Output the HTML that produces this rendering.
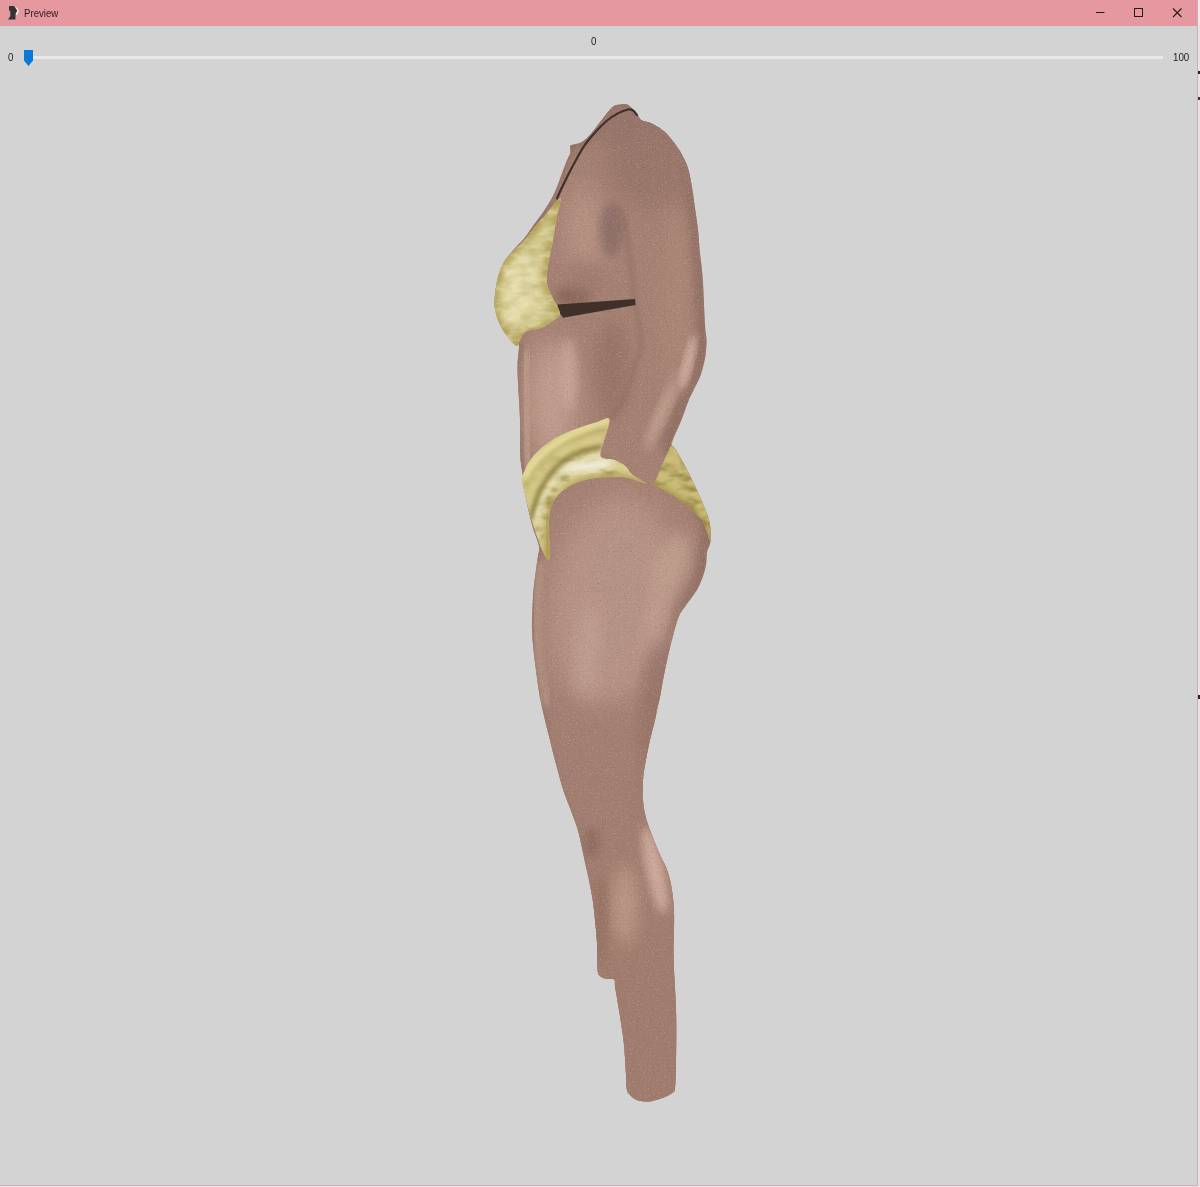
<!DOCTYPE html>
<html lang="en">
<head>
<meta charset="utf-8">
<title>Preview</title>
<style>
html,body{margin:0;padding:0;}
body{width:1200px;height:1187px;overflow:hidden;background:#e4e4e4;font-family:"Liberation Sans",sans-serif;position:relative;}
#win{position:absolute;left:0;top:0;width:1197px;height:1185px;background:#d3d3d3;border-right:1px solid #dfa9ae;border-bottom:1px solid #dfa9ae;overflow:hidden;}
#titlebar{position:absolute;left:0;top:0;width:1198px;height:26px;background:#e5989f;}
#title{position:absolute;left:24.3px;top:6px;font-size:11px;line-height:14px;color:#2a1a1c;transform:scaleX(0.875);transform-origin:0 0;}
.lbl{position:absolute;font-size:11.5px;line-height:12px;color:#222;transform:scaleX(0.85);transform-origin:0 0;}
#track{position:absolute;left:30px;top:56.2px;width:1133px;height:2.600px;background:#e8e8e8;}
#scene{position:absolute;left:0;top:0;}
</style>
</head>
<body>
<div id="win">
<svg id="scene" width="1200" height="1187" viewBox="0 0 1200 1187">

<defs>
  <clipPath id="cs"><path d="M611.0 108.5 C612.5 107.0 613.3 106.2 615.0 105.5 C616.7 104.8 619.0 104.7 621.0 104.5 C623.0 104.3 625.3 104.0 627.0 104.5 C628.7 105.0 629.2 105.8 631.0 107.5 C632.8 109.2 635.8 112.9 637.6 115.0 C639.4 117.1 639.1 118.8 641.6 120.3 C644.1 121.8 648.6 121.8 652.4 123.7 C656.2 125.6 661.0 128.7 664.6 131.8 C668.2 135.0 671.1 138.8 674.0 142.6 C676.9 146.4 679.8 150.7 682.0 154.7 C684.2 158.7 685.9 161.9 687.5 166.8 C689.1 171.7 690.2 176.9 691.5 184.3 C692.8 191.7 694.4 203.4 695.5 211.3 C696.6 219.2 697.5 225.1 698.2 231.5 C698.9 237.9 699.1 244.2 699.6 250.0 C700.1 255.8 700.9 260.5 701.5 266.0 C702.1 271.5 702.4 273.2 703.0 283.0 C703.6 292.8 704.4 315.5 705.0 325.0 C705.6 334.5 706.4 335.0 706.5 340.0 C706.6 345.0 706.1 350.5 705.5 355.0 C704.9 359.5 704.0 363.2 703.0 367.0 C702.0 370.8 700.9 374.6 699.5 378.0 C698.1 381.4 696.7 383.6 694.8 387.6 C692.9 391.6 690.3 396.4 688.0 402.0 C685.7 407.6 683.7 414.2 681.0 421.0 C678.3 427.8 672.8 438.2 672.0 443.0 C671.2 447.8 673.8 446.2 676.0 450.0 C678.2 453.8 682.0 460.4 685.0 466.0 C688.0 471.6 690.8 477.4 693.7 483.5 C696.6 489.6 699.9 496.3 702.5 502.7 C705.1 509.1 708.2 515.6 709.5 522.0 C710.8 528.4 710.9 536.0 710.5 541.0 C710.1 546.0 707.8 548.0 707.0 552.0 C706.2 556.0 706.7 561.0 706.0 565.0 C705.3 569.0 704.3 572.2 703.0 576.0 C701.7 579.8 699.8 584.5 698.0 588.0 C696.2 591.5 694.3 593.7 692.0 597.0 C689.7 600.3 686.2 604.8 684.0 608.0 C681.8 611.2 680.7 612.0 679.0 616.0 C677.3 620.0 675.8 625.3 674.0 632.0 C672.2 638.7 669.8 648.0 668.0 656.0 C666.2 664.0 664.3 673.2 663.0 680.0 C661.7 686.8 661.0 692.0 660.0 697.0 C659.0 702.0 657.8 706.2 657.0 710.0 C656.2 713.8 656.2 715.0 655.0 720.0 C653.8 725.0 651.7 732.5 650.0 740.0 C648.3 747.5 646.2 758.2 645.0 765.0 C643.8 771.8 643.3 775.2 643.0 781.0 C642.7 786.8 642.6 794.2 643.0 800.0 C643.4 805.8 644.3 811.0 645.5 816.0 C646.7 821.0 648.4 825.5 650.0 830.0 C651.6 834.5 653.2 838.5 655.0 843.0 C656.8 847.5 659.2 853.0 661.0 857.0 C662.8 861.0 664.5 863.2 666.0 867.0 C667.5 870.8 668.9 875.5 670.0 880.0 C671.1 884.5 671.8 888.7 672.5 894.0 C673.2 899.3 673.8 906.2 674.0 912.0 C674.2 917.8 674.1 922.7 674.0 929.0 C673.9 935.3 673.5 943.2 673.5 950.0 C673.5 956.8 673.8 963.7 674.0 970.0 C674.2 976.3 674.7 981.3 675.0 988.0 C675.3 994.7 675.8 1002.8 676.0 1010.0 C676.2 1017.2 676.3 1022.7 676.3 1031.0 C676.3 1039.3 676.2 1050.5 676.0 1060.0 C675.8 1069.5 675.7 1082.5 675.0 1088.0 C674.3 1093.5 673.5 1091.6 672.0 1093.0 C670.5 1094.4 668.3 1095.4 666.0 1096.5 C663.7 1097.6 660.8 1098.7 658.0 1099.5 C655.2 1100.3 651.8 1101.2 649.0 1101.5 C646.2 1101.8 643.3 1101.4 641.0 1101.0 C638.7 1100.6 636.8 1100.0 635.0 1099.0 C633.2 1098.0 631.3 1096.5 630.0 1095.0 C628.7 1093.5 627.7 1093.3 627.0 1090.0 C626.3 1086.7 626.3 1080.3 626.0 1075.0 C625.7 1069.7 625.4 1063.8 625.0 1058.0 C624.6 1052.2 624.1 1045.2 623.5 1040.0 C622.9 1034.8 622.4 1032.0 621.6 1027.0 C620.9 1022.0 619.8 1014.8 619.0 1010.0 C618.2 1005.2 617.7 1002.0 617.0 998.0 C616.3 994.0 615.5 989.1 615.0 986.0 C614.5 982.9 615.7 980.8 614.0 979.5 C612.3 978.2 607.3 979.1 605.0 978.5 C602.7 977.9 601.2 977.2 600.0 976.0 C598.8 974.8 598.2 974.5 597.7 971.0 C597.2 967.5 597.4 959.7 597.3 955.0 C597.2 950.3 597.3 948.0 597.0 943.0 C596.7 938.0 596.2 931.8 595.5 925.0 C594.8 918.2 594.1 909.5 593.0 902.0 C591.9 894.5 590.3 886.7 589.0 880.0 C587.7 873.3 586.3 868.2 585.0 862.0 C583.7 855.8 582.3 848.8 581.0 843.0 C579.7 837.2 578.8 832.8 577.0 827.0 C575.2 821.2 572.3 814.3 570.0 808.0 C567.7 801.7 565.3 796.3 563.0 789.0 C560.7 781.7 558.2 772.2 556.0 764.0 C553.8 755.8 551.8 747.3 550.0 740.0 C548.2 732.7 546.6 726.7 545.0 720.0 C543.4 713.3 541.7 705.8 540.5 700.0 C539.3 694.2 538.8 690.0 538.0 685.0 C537.2 680.0 536.8 675.8 536.0 670.0 C535.2 664.2 534.2 656.8 533.5 650.0 C532.8 643.2 532.2 636.0 532.0 629.0 C531.8 622.0 532.2 614.7 532.5 608.0 C532.8 601.3 533.0 595.3 533.6 589.0 C534.2 582.7 535.3 575.5 536.0 570.0 C536.7 564.5 537.5 560.0 538.0 556.0 C538.5 552.0 539.8 550.7 539.0 546.0 C538.2 541.3 534.8 534.3 533.0 528.0 C531.2 521.7 529.5 514.7 528.0 508.0 C526.5 501.3 524.9 493.4 524.0 488.0 C523.1 482.6 523.4 480.2 522.8 475.5 C522.2 470.8 521.0 465.9 520.5 460.0 C520.0 454.1 520.1 446.7 520.0 440.0 C519.9 433.3 520.2 426.7 520.0 420.0 C519.8 413.3 519.3 406.2 519.0 400.0 C518.7 393.8 518.2 388.8 518.0 383.0 C517.8 377.2 517.3 371.3 517.5 365.0 C517.7 358.7 519.2 348.2 519.0 345.0 C518.8 341.8 518.4 347.3 516.4 345.8 C514.4 344.3 509.8 339.6 507.0 336.0 C504.2 332.4 501.7 328.5 499.7 324.0 C497.7 319.5 495.8 313.8 495.0 309.0 C494.2 304.2 494.5 300.3 495.0 295.0 C495.5 289.7 496.5 282.5 498.0 277.0 C499.5 271.5 501.5 266.4 504.0 262.0 C506.5 257.6 509.6 254.5 513.0 250.5 C516.4 246.5 521.0 242.3 524.5 238.0 C528.0 233.7 530.8 229.0 534.0 224.5 C537.2 220.0 540.9 215.7 544.0 211.0 C547.1 206.3 550.4 200.9 552.7 196.5 C555.0 192.1 555.8 189.9 558.0 184.3 C560.2 178.7 564.0 168.0 566.0 162.8 C568.0 157.6 569.5 156.0 570.2 153.3 C570.9 150.6 569.9 147.9 570.2 146.5 C570.5 145.1 570.2 145.7 572.0 145.0 C573.8 144.3 577.9 144.2 581.0 142.5 C584.1 140.8 587.2 137.9 590.4 134.5 C593.6 131.1 597.4 125.6 600.0 122.3 C602.6 119.0 604.2 116.8 606.0 114.5 C607.8 112.2 609.5 110.0 611.0 108.5Z"/></clipPath>
  <clipPath id="ca"><path d="M613.0 204.0 C615.0 211.4 621.4 212.2 624.0 219.5 C626.6 226.8 627.2 238.2 628.5 248.0 C629.8 257.9 631.0 269.9 632.0 278.6 C633.0 287.3 633.3 291.4 634.6 300.0 C635.9 308.6 638.9 321.7 640.0 330.0 C641.1 338.3 641.7 344.7 641.0 350.0 C640.3 355.3 637.8 356.8 636.0 362.0 C634.2 367.2 632.2 374.5 630.0 381.0 C627.8 387.5 625.7 395.4 623.0 401.0 C620.3 406.6 616.3 411.7 614.0 414.6 C611.7 417.6 610.2 416.0 609.0 418.7 C607.8 421.4 608.0 426.6 607.0 431.0 C606.0 435.4 603.7 440.7 602.7 445.0 C601.7 449.3 599.0 454.5 601.0 457.0 C603.0 459.5 610.9 458.5 615.0 460.0 C619.1 461.5 622.6 463.6 625.5 466.0 C628.4 468.4 629.0 471.8 632.5 474.7 C636.0 477.6 643.6 481.8 646.5 483.5 C649.4 485.2 648.6 485.3 650.0 485.0 C651.4 484.7 652.7 485.8 655.0 481.7 C657.3 477.6 661.2 467.1 664.0 460.7 C666.8 454.2 669.2 449.6 672.0 443.0 C674.8 436.4 678.3 427.8 681.0 421.0 C683.7 414.2 685.7 407.6 688.0 402.0 C690.3 396.4 692.9 391.6 694.8 387.6 C696.7 383.6 698.1 381.4 699.5 378.0 C700.9 374.6 702.0 370.8 703.0 367.0 C704.0 363.2 704.9 359.5 705.5 355.0 C706.1 350.5 706.6 345.0 706.5 340.0 C706.4 335.0 705.6 334.5 705.0 325.0 C704.4 315.5 703.5 293.8 703.0 283.0 C702.5 272.2 702.5 268.5 702.0 260.0 C701.5 251.5 701.0 241.2 700.0 232.0 C699.0 222.8 697.7 213.3 696.0 205.0 C694.3 196.7 692.5 189.5 690.0 182.0 C687.5 174.5 684.3 166.8 681.0 160.0 C677.7 153.2 674.2 146.3 670.0 141.0 C665.8 135.7 660.2 130.8 656.0 128.0 C651.8 125.2 650.2 121.2 645.0 124.0 C639.8 126.8 630.5 136.5 625.0 145.0 C619.5 153.5 614.0 165.2 612.0 175.0 C610.0 184.8 611.0 196.6 613.0 204.0Z"/></clipPath>
  <clipPath id="cc"><path d="M559.0 199.0 C556.7 201.1 550.6 209.0 546.8 213.4 C543.0 217.8 539.5 221.2 536.0 225.5 C532.5 229.8 529.3 234.8 525.5 239.0 C521.7 243.2 517.0 247.2 513.4 251.0 C509.8 254.8 506.6 257.7 504.0 262.0 C501.4 266.3 499.5 271.5 498.0 277.0 C496.5 282.5 495.5 289.7 495.0 295.0 C494.5 300.3 494.2 304.2 495.0 309.0 C495.8 313.8 497.7 319.5 499.7 324.0 C501.7 328.5 504.2 332.4 507.0 336.0 C509.8 339.6 514.2 345.1 516.4 345.8 C518.6 346.5 518.5 342.4 520.0 340.0 C521.5 337.6 522.0 333.7 525.5 331.7 C529.0 329.7 536.2 329.8 540.7 328.0 C545.2 326.2 549.6 323.4 552.8 321.0 C556.0 318.6 560.0 317.3 560.0 313.5 C560.0 309.7 555.0 303.1 552.8 298.0 C550.6 292.9 547.6 288.5 546.8 283.0 C546.0 277.5 547.0 272.1 548.0 265.0 C549.0 257.9 551.4 248.5 552.8 240.7 C554.2 232.9 555.3 224.6 556.6 218.0 C557.9 211.4 560.1 204.2 560.5 201.0 C560.9 197.8 561.3 196.9 559.0 199.0Z"/></clipPath>
  <clipPath id="cf"><path d="M523.0 474.7 C524.5 471.2 527.3 463.9 531.0 459.0 C534.7 454.1 539.8 449.1 545.0 445.0 C550.2 440.9 556.7 437.4 562.5 434.5 C568.3 431.6 574.2 429.6 580.0 427.5 C585.8 425.4 592.7 423.5 597.5 422.0 C602.3 420.5 607.4 417.2 609.0 418.7 C610.6 420.2 608.0 426.6 607.0 431.0 C606.0 435.4 603.7 440.7 602.7 445.0 C601.7 449.3 599.0 454.5 601.0 457.0 C603.0 459.5 610.9 458.5 615.0 460.0 C619.1 461.5 622.6 463.6 625.5 466.0 C628.4 468.4 629.0 471.8 632.5 474.7 C636.0 477.6 646.5 482.8 646.5 483.5 C646.5 484.2 636.6 480.1 632.5 479.0 C628.4 477.9 626.1 477.3 622.0 477.0 C617.9 476.7 613.5 476.7 608.0 477.0 C602.5 477.3 594.9 477.7 588.7 479.0 C582.5 480.3 576.0 482.5 571.0 485.0 C566.0 487.5 562.2 490.8 559.0 494.0 C555.8 497.2 553.7 500.4 552.0 504.5 C550.3 508.6 549.5 513.2 549.0 518.5 C548.5 523.8 548.8 530.8 549.0 536.0 C549.2 541.2 550.1 545.9 550.0 550.0 C549.9 554.1 549.7 560.2 548.5 560.5 C547.3 560.8 544.8 555.2 543.0 551.7 C541.2 548.2 539.7 544.2 538.0 539.5 C536.3 534.8 534.3 529.0 532.7 523.7 C531.1 518.5 529.7 513.0 528.4 508.0 C527.1 503.1 526.1 498.7 525.0 494.0 C523.9 489.3 522.3 483.2 522.0 480.0 C521.7 476.8 521.5 478.2 523.0 474.7Z"/></clipPath>
  <clipPath id="cb"><path d="M671.0 444.0 C671.5 445.4 673.7 446.3 676.0 450.0 C678.3 453.7 682.0 460.4 685.0 466.0 C688.0 471.6 690.8 477.4 693.7 483.5 C696.6 489.6 699.9 496.3 702.5 502.7 C705.1 509.1 708.2 515.6 709.5 522.0 C710.8 528.4 710.5 538.1 710.5 541.0 C710.5 543.9 710.6 542.4 709.5 539.5 C708.4 536.6 706.6 528.4 704.0 523.7 C701.4 519.0 697.5 515.3 693.7 511.5 C690.0 507.7 685.9 504.2 681.5 501.0 C677.1 497.8 672.2 494.7 667.5 492.0 C662.8 489.3 656.4 486.2 653.5 485.0 C650.6 483.8 649.8 485.6 650.0 485.0 C650.2 484.4 652.7 485.8 655.0 481.7 C657.3 477.6 661.0 467.4 664.0 460.7 C667.0 454.0 671.5 444.3 672.7 441.5 C673.9 438.7 670.5 442.6 671.0 444.0Z"/></clipPath>
  <filter id="b2" x="-20%" y="-20%" width="140%" height="140%"><feGaussianBlur stdDeviation="2"/></filter>
  <filter id="b3" x="-20%" y="-20%" width="140%" height="140%"><feGaussianBlur stdDeviation="3"/></filter>
  <filter id="b4" x="-20%" y="-20%" width="140%" height="140%"><feGaussianBlur stdDeviation="4"/></filter>
  <filter id="b5" x="-30%" y="-30%" width="160%" height="160%"><feGaussianBlur stdDeviation="5"/></filter>
  <filter id="b8" x="-40%" y="-40%" width="180%" height="180%"><feGaussianBlur stdDeviation="8"/></filter>
  <filter id="b12" x="-60%" y="-60%" width="220%" height="220%"><feGaussianBlur stdDeviation="12"/></filter>
  <filter id="mottle" x="0" y="0" width="100%" height="100%" color-interpolation-filters="sRGB">
    <feTurbulence type="fractalNoise" baseFrequency="0.05 0.11" numOctaves="3" seed="3"/>
    <feColorMatrix type="matrix" values="0 0 0 0 0.5  0 0 0 0 0.45  0 0 0 0 0.2  1.8 0 0 0 -0.8"/>
  </filter>
  <filter id="mottleL" x="0" y="0" width="100%" height="100%" color-interpolation-filters="sRGB">
    <feTurbulence type="fractalNoise" baseFrequency="0.07 0.13" numOctaves="3" seed="11"/>
    <feColorMatrix type="matrix" values="0 0 0 0 0.95  0 0 0 0 0.93  0 0 0 0 0.78  0 1.8 0 0 -0.8"/>
  </filter>
  <filter id="grain" x="0" y="0" width="100%" height="100%" color-interpolation-filters="sRGB">
    <feTurbulence type="fractalNoise" baseFrequency="0.75" numOctaves="2" seed="7"/>
    <feColorMatrix type="matrix" values="0 0 0 0 1  0 0 0 0 0.93  0 0 0 0 0.86  0 0 5 0 -3.050"/>
  </filter>
  <filter id="graind" x="0" y="0" width="100%" height="100%" color-interpolation-filters="sRGB">
    <feTurbulence type="fractalNoise" baseFrequency="0.7" numOctaves="2" seed="23"/>
    <feColorMatrix type="matrix" values="0 0 0 0 0.35  0 0 0 0 0.22  0 0 0 0 0.18  0 5 0 0 -3.050"/>
  </filter>
  <linearGradient id="legdark" gradientUnits="userSpaceOnUse" x1="0" y1="650" x2="0" y2="1000">
    <stop offset="0" stop-color="#a17e70" stop-opacity="0"/>
    <stop offset="0.3" stop-color="#a17e70" stop-opacity="0.85"/>
    <stop offset="1" stop-color="#9f7c6d" stop-opacity="1"/>
  </linearGradient>
</defs>
<g id="body">
  <path d="M611.0 108.5 C612.5 107.0 613.3 106.2 615.0 105.5 C616.7 104.8 619.0 104.7 621.0 104.5 C623.0 104.3 625.3 104.0 627.0 104.5 C628.7 105.0 629.2 105.8 631.0 107.5 C632.8 109.2 635.8 112.9 637.6 115.0 C639.4 117.1 639.1 118.8 641.6 120.3 C644.1 121.8 648.6 121.8 652.4 123.7 C656.2 125.6 661.0 128.7 664.6 131.8 C668.2 135.0 671.1 138.8 674.0 142.6 C676.9 146.4 679.8 150.7 682.0 154.7 C684.2 158.7 685.9 161.9 687.5 166.8 C689.1 171.7 690.2 176.9 691.5 184.3 C692.8 191.7 694.4 203.4 695.5 211.3 C696.6 219.2 697.5 225.1 698.2 231.5 C698.9 237.9 699.1 244.2 699.6 250.0 C700.1 255.8 700.9 260.5 701.5 266.0 C702.1 271.5 702.4 273.2 703.0 283.0 C703.6 292.8 704.4 315.5 705.0 325.0 C705.6 334.5 706.4 335.0 706.5 340.0 C706.6 345.0 706.1 350.5 705.5 355.0 C704.9 359.5 704.0 363.2 703.0 367.0 C702.0 370.8 700.9 374.6 699.5 378.0 C698.1 381.4 696.7 383.6 694.8 387.6 C692.9 391.6 690.3 396.4 688.0 402.0 C685.7 407.6 683.7 414.2 681.0 421.0 C678.3 427.8 672.8 438.2 672.0 443.0 C671.2 447.8 673.8 446.2 676.0 450.0 C678.2 453.8 682.0 460.4 685.0 466.0 C688.0 471.6 690.8 477.4 693.7 483.5 C696.6 489.6 699.9 496.3 702.5 502.7 C705.1 509.1 708.2 515.6 709.5 522.0 C710.8 528.4 710.9 536.0 710.5 541.0 C710.1 546.0 707.8 548.0 707.0 552.0 C706.2 556.0 706.7 561.0 706.0 565.0 C705.3 569.0 704.3 572.2 703.0 576.0 C701.7 579.8 699.8 584.5 698.0 588.0 C696.2 591.5 694.3 593.7 692.0 597.0 C689.7 600.3 686.2 604.8 684.0 608.0 C681.8 611.2 680.7 612.0 679.0 616.0 C677.3 620.0 675.8 625.3 674.0 632.0 C672.2 638.7 669.8 648.0 668.0 656.0 C666.2 664.0 664.3 673.2 663.0 680.0 C661.7 686.8 661.0 692.0 660.0 697.0 C659.0 702.0 657.8 706.2 657.0 710.0 C656.2 713.8 656.2 715.0 655.0 720.0 C653.8 725.0 651.7 732.5 650.0 740.0 C648.3 747.5 646.2 758.2 645.0 765.0 C643.8 771.8 643.3 775.2 643.0 781.0 C642.7 786.8 642.6 794.2 643.0 800.0 C643.4 805.8 644.3 811.0 645.5 816.0 C646.7 821.0 648.4 825.5 650.0 830.0 C651.6 834.5 653.2 838.5 655.0 843.0 C656.8 847.5 659.2 853.0 661.0 857.0 C662.8 861.0 664.5 863.2 666.0 867.0 C667.5 870.8 668.9 875.5 670.0 880.0 C671.1 884.5 671.8 888.7 672.5 894.0 C673.2 899.3 673.8 906.2 674.0 912.0 C674.2 917.8 674.1 922.7 674.0 929.0 C673.9 935.3 673.5 943.2 673.5 950.0 C673.5 956.8 673.8 963.7 674.0 970.0 C674.2 976.3 674.7 981.3 675.0 988.0 C675.3 994.7 675.8 1002.8 676.0 1010.0 C676.2 1017.2 676.3 1022.7 676.3 1031.0 C676.3 1039.3 676.2 1050.5 676.0 1060.0 C675.8 1069.5 675.7 1082.5 675.0 1088.0 C674.3 1093.5 673.5 1091.6 672.0 1093.0 C670.5 1094.4 668.3 1095.4 666.0 1096.5 C663.7 1097.6 660.8 1098.7 658.0 1099.5 C655.2 1100.3 651.8 1101.2 649.0 1101.5 C646.2 1101.8 643.3 1101.4 641.0 1101.0 C638.7 1100.6 636.8 1100.0 635.0 1099.0 C633.2 1098.0 631.3 1096.5 630.0 1095.0 C628.7 1093.5 627.7 1093.3 627.0 1090.0 C626.3 1086.7 626.3 1080.3 626.0 1075.0 C625.7 1069.7 625.4 1063.8 625.0 1058.0 C624.6 1052.2 624.1 1045.2 623.5 1040.0 C622.9 1034.8 622.4 1032.0 621.6 1027.0 C620.9 1022.0 619.8 1014.8 619.0 1010.0 C618.2 1005.2 617.7 1002.0 617.0 998.0 C616.3 994.0 615.5 989.1 615.0 986.0 C614.5 982.9 615.7 980.8 614.0 979.5 C612.3 978.2 607.3 979.1 605.0 978.5 C602.7 977.9 601.2 977.2 600.0 976.0 C598.8 974.8 598.2 974.5 597.7 971.0 C597.2 967.5 597.4 959.7 597.3 955.0 C597.2 950.3 597.3 948.0 597.0 943.0 C596.7 938.0 596.2 931.8 595.5 925.0 C594.8 918.2 594.1 909.5 593.0 902.0 C591.9 894.5 590.3 886.7 589.0 880.0 C587.7 873.3 586.3 868.2 585.0 862.0 C583.7 855.8 582.3 848.8 581.0 843.0 C579.7 837.2 578.8 832.8 577.0 827.0 C575.2 821.2 572.3 814.3 570.0 808.0 C567.7 801.7 565.3 796.3 563.0 789.0 C560.7 781.7 558.2 772.2 556.0 764.0 C553.8 755.8 551.8 747.3 550.0 740.0 C548.2 732.7 546.6 726.7 545.0 720.0 C543.4 713.3 541.7 705.8 540.5 700.0 C539.3 694.2 538.8 690.0 538.0 685.0 C537.2 680.0 536.8 675.8 536.0 670.0 C535.2 664.2 534.2 656.8 533.5 650.0 C532.8 643.2 532.2 636.0 532.0 629.0 C531.8 622.0 532.2 614.7 532.5 608.0 C532.8 601.3 533.0 595.3 533.6 589.0 C534.2 582.7 535.3 575.5 536.0 570.0 C536.7 564.5 537.5 560.0 538.0 556.0 C538.5 552.0 539.8 550.7 539.0 546.0 C538.2 541.3 534.8 534.3 533.0 528.0 C531.2 521.7 529.5 514.7 528.0 508.0 C526.5 501.3 524.9 493.4 524.0 488.0 C523.1 482.6 523.4 480.2 522.8 475.5 C522.2 470.8 521.0 465.9 520.5 460.0 C520.0 454.1 520.1 446.7 520.0 440.0 C519.9 433.3 520.2 426.7 520.0 420.0 C519.8 413.3 519.3 406.2 519.0 400.0 C518.7 393.8 518.2 388.8 518.0 383.0 C517.8 377.2 517.3 371.3 517.5 365.0 C517.7 358.7 519.2 348.2 519.0 345.0 C518.8 341.8 518.4 347.3 516.4 345.8 C514.4 344.3 509.8 339.6 507.0 336.0 C504.2 332.4 501.7 328.5 499.7 324.0 C497.7 319.5 495.8 313.8 495.0 309.0 C494.2 304.2 494.5 300.3 495.0 295.0 C495.5 289.7 496.5 282.5 498.0 277.0 C499.5 271.5 501.5 266.4 504.0 262.0 C506.5 257.6 509.6 254.5 513.0 250.5 C516.4 246.5 521.0 242.3 524.5 238.0 C528.0 233.7 530.8 229.0 534.0 224.5 C537.2 220.0 540.9 215.7 544.0 211.0 C547.1 206.3 550.4 200.9 552.7 196.5 C555.0 192.1 555.8 189.9 558.0 184.3 C560.2 178.7 564.0 168.0 566.0 162.8 C568.0 157.6 569.5 156.0 570.2 153.3 C570.9 150.6 569.9 147.9 570.2 146.5 C570.5 145.1 570.2 145.7 572.0 145.0 C573.8 144.3 577.9 144.2 581.0 142.5 C584.1 140.8 587.2 137.9 590.4 134.5 C593.6 131.1 597.4 125.6 600.0 122.3 C602.6 119.0 604.2 116.8 606.0 114.5 C607.8 112.2 609.5 110.0 611.0 108.5Z" fill="#a48173"/>
  <g clip-path="url(#cs)">
    <path d="M611.0 108.5 C612.5 107.0 613.3 106.2 615.0 105.5 C616.7 104.8 619.0 104.7 621.0 104.5 C623.0 104.3 625.3 104.0 627.0 104.5 C628.7 105.0 629.2 105.8 631.0 107.5 C632.8 109.2 635.8 112.9 637.6 115.0 C639.4 117.1 639.1 118.8 641.6 120.3 C644.1 121.8 648.6 121.8 652.4 123.7 C656.2 125.6 661.0 128.7 664.6 131.8 C668.2 135.0 671.1 138.8 674.0 142.6 C676.9 146.4 679.8 150.7 682.0 154.7 C684.2 158.7 685.9 161.9 687.5 166.8 C689.1 171.7 690.2 176.9 691.5 184.3 C692.8 191.7 694.4 203.4 695.5 211.3 C696.6 219.2 697.5 225.1 698.2 231.5 C698.9 237.9 699.1 244.2 699.6 250.0 C700.1 255.8 700.9 260.5 701.5 266.0 C702.1 271.5 702.4 273.2 703.0 283.0 C703.6 292.8 704.4 315.5 705.0 325.0 C705.6 334.5 706.4 335.0 706.5 340.0 C706.6 345.0 706.1 350.5 705.5 355.0 C704.9 359.5 704.0 363.2 703.0 367.0 C702.0 370.8 700.9 374.6 699.5 378.0 C698.1 381.4 696.7 383.6 694.8 387.6 C692.9 391.6 690.3 396.4 688.0 402.0 C685.7 407.6 683.7 414.2 681.0 421.0 C678.3 427.8 672.8 438.2 672.0 443.0 C671.2 447.8 673.8 446.2 676.0 450.0 C678.2 453.8 682.0 460.4 685.0 466.0 C688.0 471.6 690.8 477.4 693.7 483.5 C696.6 489.6 699.9 496.3 702.5 502.7 C705.1 509.1 708.2 515.6 709.5 522.0 C710.8 528.4 710.9 536.0 710.5 541.0 C710.1 546.0 707.8 548.0 707.0 552.0 C706.2 556.0 706.7 561.0 706.0 565.0 C705.3 569.0 704.3 572.2 703.0 576.0 C701.7 579.8 699.8 584.5 698.0 588.0 C696.2 591.5 694.3 593.7 692.0 597.0 C689.7 600.3 686.2 604.8 684.0 608.0 C681.8 611.2 680.7 612.0 679.0 616.0 C677.3 620.0 675.8 625.3 674.0 632.0 C672.2 638.7 669.8 648.0 668.0 656.0 C666.2 664.0 664.3 673.2 663.0 680.0 C661.7 686.8 661.0 692.0 660.0 697.0 C659.0 702.0 657.8 706.2 657.0 710.0 C656.2 713.8 656.2 715.0 655.0 720.0 C653.8 725.0 651.7 732.5 650.0 740.0 C648.3 747.5 646.2 758.2 645.0 765.0 C643.8 771.8 643.3 775.2 643.0 781.0 C642.7 786.8 642.6 794.2 643.0 800.0 C643.4 805.8 644.3 811.0 645.5 816.0 C646.7 821.0 648.4 825.5 650.0 830.0 C651.6 834.5 653.2 838.5 655.0 843.0 C656.8 847.5 659.2 853.0 661.0 857.0 C662.8 861.0 664.5 863.2 666.0 867.0 C667.5 870.8 668.9 875.5 670.0 880.0 C671.1 884.5 671.8 888.7 672.5 894.0 C673.2 899.3 673.8 906.2 674.0 912.0 C674.2 917.8 674.1 922.7 674.0 929.0 C673.9 935.3 673.5 943.2 673.5 950.0 C673.5 956.8 673.8 963.7 674.0 970.0 C674.2 976.3 674.7 981.3 675.0 988.0 C675.3 994.7 675.8 1002.8 676.0 1010.0 C676.2 1017.2 676.3 1022.7 676.3 1031.0 C676.3 1039.3 676.2 1050.5 676.0 1060.0 C675.8 1069.5 675.7 1082.5 675.0 1088.0 C674.3 1093.5 673.5 1091.6 672.0 1093.0 C670.5 1094.4 668.3 1095.4 666.0 1096.5 C663.7 1097.6 660.8 1098.7 658.0 1099.5 C655.2 1100.3 651.8 1101.2 649.0 1101.5 C646.2 1101.8 643.3 1101.4 641.0 1101.0 C638.7 1100.6 636.8 1100.0 635.0 1099.0 C633.2 1098.0 631.3 1096.5 630.0 1095.0 C628.7 1093.5 627.7 1093.3 627.0 1090.0 C626.3 1086.7 626.3 1080.3 626.0 1075.0 C625.7 1069.7 625.4 1063.8 625.0 1058.0 C624.6 1052.2 624.1 1045.2 623.5 1040.0 C622.9 1034.8 622.4 1032.0 621.6 1027.0 C620.9 1022.0 619.8 1014.8 619.0 1010.0 C618.2 1005.2 617.7 1002.0 617.0 998.0 C616.3 994.0 615.5 989.1 615.0 986.0 C614.5 982.9 615.7 980.8 614.0 979.5 C612.3 978.2 607.3 979.1 605.0 978.5 C602.7 977.9 601.2 977.2 600.0 976.0 C598.8 974.8 598.2 974.5 597.7 971.0 C597.2 967.5 597.4 959.7 597.3 955.0 C597.2 950.3 597.3 948.0 597.0 943.0 C596.7 938.0 596.2 931.8 595.5 925.0 C594.8 918.2 594.1 909.5 593.0 902.0 C591.9 894.5 590.3 886.7 589.0 880.0 C587.7 873.3 586.3 868.2 585.0 862.0 C583.7 855.8 582.3 848.8 581.0 843.0 C579.7 837.2 578.8 832.8 577.0 827.0 C575.2 821.2 572.3 814.3 570.0 808.0 C567.7 801.7 565.3 796.3 563.0 789.0 C560.7 781.7 558.2 772.2 556.0 764.0 C553.8 755.8 551.8 747.3 550.0 740.0 C548.2 732.7 546.6 726.7 545.0 720.0 C543.4 713.3 541.7 705.8 540.5 700.0 C539.3 694.2 538.8 690.0 538.0 685.0 C537.2 680.0 536.8 675.8 536.0 670.0 C535.2 664.2 534.2 656.8 533.5 650.0 C532.8 643.2 532.2 636.0 532.0 629.0 C531.8 622.0 532.2 614.7 532.5 608.0 C532.8 601.3 533.0 595.3 533.6 589.0 C534.2 582.7 535.3 575.5 536.0 570.0 C536.7 564.5 537.5 560.0 538.0 556.0 C538.5 552.0 539.8 550.7 539.0 546.0 C538.2 541.3 534.8 534.3 533.0 528.0 C531.2 521.7 529.5 514.7 528.0 508.0 C526.5 501.3 524.9 493.4 524.0 488.0 C523.1 482.6 523.4 480.2 522.8 475.5 C522.2 470.8 521.0 465.9 520.5 460.0 C520.0 454.1 520.1 446.7 520.0 440.0 C519.9 433.3 520.2 426.7 520.0 420.0 C519.8 413.3 519.3 406.2 519.0 400.0 C518.7 393.8 518.2 388.8 518.0 383.0 C517.8 377.2 517.3 371.3 517.5 365.0 C517.7 358.7 519.2 348.2 519.0 345.0 C518.8 341.8 518.4 347.3 516.4 345.8 C514.4 344.3 509.8 339.6 507.0 336.0 C504.2 332.4 501.7 328.5 499.7 324.0 C497.7 319.5 495.8 313.8 495.0 309.0 C494.2 304.2 494.5 300.3 495.0 295.0 C495.5 289.7 496.5 282.5 498.0 277.0 C499.5 271.5 501.5 266.4 504.0 262.0 C506.5 257.6 509.6 254.5 513.0 250.5 C516.4 246.5 521.0 242.3 524.5 238.0 C528.0 233.7 530.8 229.0 534.0 224.5 C537.2 220.0 540.9 215.7 544.0 211.0 C547.1 206.3 550.4 200.9 552.7 196.5 C555.0 192.1 555.8 189.9 558.0 184.3 C560.2 178.7 564.0 168.0 566.0 162.8 C568.0 157.6 569.5 156.0 570.2 153.3 C570.9 150.6 569.9 147.9 570.2 146.5 C570.5 145.1 570.2 145.7 572.0 145.0 C573.8 144.3 577.9 144.2 581.0 142.5 C584.1 140.8 587.2 137.9 590.4 134.5 C593.6 131.1 597.4 125.6 600.0 122.3 C602.6 119.0 604.2 116.8 606.0 114.5 C607.8 112.2 609.5 110.0 611.0 108.5Z" fill="none" stroke="#916f64" stroke-width="13" filter="url(#b4)" transform="translate(-4 0)"/>
    <rect x="520" y="650" width="170" height="460" fill="url(#legdark)"/>
    <!-- highlights -->
    <ellipse cx="612" cy="600" rx="62" ry="105" fill="#b59286" filter="url(#b12)" transform="rotate(8 612 600)"/>
    <ellipse cx="588" cy="650" rx="10" ry="48" fill="#c09f8f" filter="url(#b8)" transform="rotate(4 588 650)"/>
    <ellipse cx="659" cy="603" rx="8" ry="52" fill="#bf9e8e" filter="url(#b8)" transform="rotate(14 659 603)"/>
    <ellipse cx="672" cy="562" rx="16" ry="30" fill="#be9d8d" filter="url(#b8)" transform="rotate(20 672 562)"/>
    <path d="M541 562 C535 600 534 650 547 705" fill="none" stroke="#b79584" stroke-width="6" filter="url(#b3)"/>
    <ellipse cx="552" cy="400" rx="24" ry="60" fill="#bf9c8d" filter="url(#b12)"/>
    <ellipse cx="568" cy="375" rx="8" ry="36" fill="#c5a394" filter="url(#b5)"/>
    <path d="M526 350 C524 385 526 430 529 470" fill="none" stroke="#be9c8c" stroke-width="7" filter="url(#b3)"/>
    <ellipse cx="664" cy="408" rx="6" ry="46" fill="#c09f8f" filter="url(#b4)" transform="rotate(24 664 408)"/>
    <ellipse cx="585" cy="235" rx="20" ry="50" fill="#b69283" filter="url(#b12)"/>
    <ellipse cx="655" cy="870" rx="9" ry="45" fill="#cba899" filter="url(#b4)" transform="rotate(-12 655 870)"/>
    <ellipse cx="625" cy="905" rx="12" ry="40" fill="#ba9787" filter="url(#b8)"/>
    <ellipse cx="676" cy="300" rx="13" ry="95" fill="#aa8677" filter="url(#b8)"/>
    <ellipse cx="688" cy="362" rx="5" ry="28" fill="#ccac9e" filter="url(#b3)" transform="rotate(14 688 362)"/>
    <!-- shadows -->
    <ellipse cx="650" cy="165" rx="45" ry="45" fill="#99776a" filter="url(#b12)"/>
    <ellipse cx="618" cy="125" rx="32" ry="22" fill="#96746a" filter="url(#b8)"/>
    <ellipse cx="612" cy="370" rx="18" ry="50" fill="#987567" filter="url(#b8)"/>
    <ellipse cx="652" cy="700" rx="10" ry="60" fill="#987567" filter="url(#b8)" transform="rotate(8 652 700)"/>
    <ellipse cx="612" cy="230" rx="12" ry="27" fill="#8f6f67" filter="url(#b4)"/>
    <ellipse cx="573" cy="296" rx="18" ry="10" fill="#896658" filter="url(#b5)"/>
    <ellipse cx="585" cy="278" rx="22" ry="18" fill="#9a776a" filter="url(#b8)" opacity="0.7"/>
    <ellipse cx="592" cy="843" rx="9" ry="15" fill="#906e62" filter="url(#b4)"/>
    <ellipse cx="601" cy="920" rx="6" ry="45" fill="#967263" filter="url(#b5)"/>
    <rect x="480" y="95" width="250" height="1020" filter="url(#grain)" opacity="0.22"/>
    <rect x="480" y="95" width="250" height="1020" filter="url(#graind)" opacity="0.16"/>
    <path d="M613.0 204.0 C614.8 206.6 621.4 212.2 624.0 219.5 C626.6 226.8 627.2 238.2 628.5 248.0 C629.8 257.9 631.0 269.9 632.0 278.6 C633.0 287.3 633.3 291.4 634.6 300.0 C635.9 308.6 638.9 321.7 640.0 330.0 C641.1 338.3 641.7 344.7 641.0 350.0 C640.3 355.3 637.8 356.8 636.0 362.0 C634.2 367.2 632.2 374.5 630.0 381.0 C627.8 387.5 625.7 395.4 623.0 401.0 C620.3 406.6 616.3 411.7 614.0 414.6 C611.7 417.6 609.8 418.0 609.0 418.7" fill="none" stroke="#906d61" stroke-width="3" filter="url(#b2)" opacity="0.8"/>
  </g>
  <!-- back bikini -->
  <path d="M671.0 444.0 C671.5 445.4 673.7 446.3 676.0 450.0 C678.3 453.7 682.0 460.4 685.0 466.0 C688.0 471.6 690.8 477.4 693.7 483.5 C696.6 489.6 699.9 496.3 702.5 502.7 C705.1 509.1 708.2 515.6 709.5 522.0 C710.8 528.4 710.5 538.1 710.5 541.0 C710.5 543.9 710.6 542.4 709.5 539.5 C708.4 536.6 706.6 528.4 704.0 523.7 C701.4 519.0 697.5 515.3 693.7 511.5 C690.0 507.7 685.9 504.2 681.5 501.0 C677.1 497.8 672.2 494.7 667.5 492.0 C662.8 489.3 656.4 486.2 653.5 485.0 C650.6 483.8 649.8 485.6 650.0 485.0 C650.2 484.4 652.7 485.8 655.0 481.7 C657.3 477.6 661.0 467.4 664.0 460.7 C667.0 454.0 671.5 444.3 672.7 441.5 C673.9 438.7 670.5 442.6 671.0 444.0Z" fill="#cabb76"/>
  <g clip-path="url(#cb)">
    <path d="M650 486 C670 492 700 510 711 545" fill="none" stroke="#a3934e" stroke-width="8" filter="url(#b3)"/>
    <rect x="640" y="435" width="80" height="115" filter="url(#mottle)"/>
  </g>
  <!-- back strap -->
  <path d="M557.5 304.5 L635.0 299.0 L635.5 305.0 L563.0 317.8 L559.0 312.0Z" fill="#40302a"/>
  <!-- cup -->
  <path d="M559.0 199.0 C556.7 201.1 550.6 209.0 546.8 213.4 C543.0 217.8 539.5 221.2 536.0 225.5 C532.5 229.8 529.3 234.8 525.5 239.0 C521.7 243.2 517.0 247.2 513.4 251.0 C509.8 254.8 506.6 257.7 504.0 262.0 C501.4 266.3 499.5 271.5 498.0 277.0 C496.5 282.5 495.5 289.7 495.0 295.0 C494.5 300.3 494.2 304.2 495.0 309.0 C495.8 313.8 497.7 319.5 499.7 324.0 C501.7 328.5 504.2 332.4 507.0 336.0 C509.8 339.6 514.2 345.1 516.4 345.8 C518.6 346.5 518.5 342.4 520.0 340.0 C521.5 337.6 522.0 333.7 525.5 331.7 C529.0 329.7 536.2 329.8 540.7 328.0 C545.2 326.2 549.6 323.4 552.8 321.0 C556.0 318.6 560.0 317.3 560.0 313.5 C560.0 309.7 555.0 303.1 552.8 298.0 C550.6 292.9 547.6 288.5 546.8 283.0 C546.0 277.5 547.0 272.1 548.0 265.0 C549.0 257.9 551.4 248.5 552.8 240.7 C554.2 232.9 555.3 224.6 556.6 218.0 C557.9 211.4 560.1 204.2 560.5 201.0 C560.9 197.8 561.3 196.9 559.0 199.0Z" fill="#d6cb92"/>
  <g clip-path="url(#cc)">
    <path d="M559.0 199.0 C556.7 201.1 550.6 209.0 546.8 213.4 C543.0 217.8 539.5 221.2 536.0 225.5 C532.5 229.8 529.3 234.8 525.5 239.0 C521.7 243.2 517.0 247.2 513.4 251.0 C509.8 254.8 506.6 257.7 504.0 262.0 C501.4 266.3 499.5 271.5 498.0 277.0 C496.5 282.5 495.5 289.7 495.0 295.0 C494.5 300.3 494.2 304.2 495.0 309.0 C495.8 313.8 497.7 319.5 499.7 324.0 C501.7 328.5 504.2 332.4 507.0 336.0 C509.8 339.6 514.2 345.1 516.4 345.8 C518.6 346.5 518.5 342.4 520.0 340.0 C521.5 337.6 522.0 333.7 525.5 331.7 C529.0 329.7 536.2 329.8 540.7 328.0 C545.2 326.2 549.6 323.4 552.8 321.0 C556.0 318.6 560.0 317.3 560.0 313.5 C560.0 309.7 555.0 303.1 552.8 298.0 C550.6 292.9 547.6 288.5 546.8 283.0 C546.0 277.5 547.0 272.1 548.0 265.0 C549.0 257.9 551.4 248.5 552.8 240.7 C554.2 232.9 555.3 224.6 556.6 218.0 C557.9 211.4 560.1 204.2 560.5 201.0 C560.9 197.8 561.3 196.9 559.0 199.0Z" fill="none" stroke="#b5a55c" stroke-width="10" filter="url(#b3)"/>
    <ellipse cx="520" cy="290" rx="14" ry="35" fill="#e4dcaa" filter="url(#b5)" transform="rotate(15 520 290)"/>
    <rect x="490" y="190" width="80" height="165" filter="url(#mottle)" opacity="0.32"/>
    <rect x="490" y="190" width="80" height="165" filter="url(#mottleL)" opacity="0.7"/>
  </g>
  <path d="M557.0 198.5 C558.1 196.1 560.8 189.8 563.5 184.3 C566.2 178.8 569.6 171.8 573.0 165.5 C576.4 159.2 580.1 152.0 583.7 146.6 C587.3 141.2 590.7 137.3 594.5 133.0 C598.3 128.7 602.8 124.2 606.6 121.0 C610.4 117.8 613.8 115.5 617.4 113.6 C621.0 111.7 625.6 110.0 628.2 109.5 C630.8 109.0 631.5 109.6 633.0 110.5 C634.5 111.4 636.3 114.2 637.0 115.0" fill="none" stroke="#40302a" stroke-width="2.200" stroke-linecap="round"/>
  <!-- front bikini -->
  <path d="M523.0 474.7 C524.5 471.2 527.3 463.9 531.0 459.0 C534.7 454.1 539.8 449.1 545.0 445.0 C550.2 440.9 556.7 437.4 562.5 434.5 C568.3 431.6 574.2 429.6 580.0 427.5 C585.8 425.4 592.7 423.5 597.5 422.0 C602.3 420.5 607.4 417.2 609.0 418.7 C610.6 420.2 608.0 426.6 607.0 431.0 C606.0 435.4 603.7 440.7 602.7 445.0 C601.7 449.3 599.0 454.5 601.0 457.0 C603.0 459.5 610.9 458.5 615.0 460.0 C619.1 461.5 622.6 463.6 625.5 466.0 C628.4 468.4 629.0 471.8 632.5 474.7 C636.0 477.6 646.5 482.8 646.5 483.5 C646.5 484.2 636.6 480.1 632.5 479.0 C628.4 477.9 626.1 477.3 622.0 477.0 C617.9 476.7 613.5 476.7 608.0 477.0 C602.5 477.3 594.9 477.7 588.7 479.0 C582.5 480.3 576.0 482.5 571.0 485.0 C566.0 487.5 562.2 490.8 559.0 494.0 C555.8 497.2 553.7 500.4 552.0 504.5 C550.3 508.6 549.5 513.2 549.0 518.5 C548.5 523.8 548.8 530.8 549.0 536.0 C549.2 541.2 550.1 545.9 550.0 550.0 C549.9 554.1 549.7 560.2 548.5 560.5 C547.3 560.8 544.8 555.2 543.0 551.7 C541.2 548.2 539.7 544.2 538.0 539.5 C536.3 534.8 534.3 529.0 532.7 523.7 C531.1 518.5 529.7 513.0 528.4 508.0 C527.1 503.1 526.1 498.7 525.0 494.0 C523.9 489.3 522.3 483.2 522.0 480.0 C521.7 476.8 521.5 478.2 523.0 474.7Z" fill="#d8cd93"/>
  <g clip-path="url(#cf)">
    <rect x="515" y="410" width="140" height="160" filter="url(#mottle)"/>
    <rect x="515" y="410" width="140" height="160" filter="url(#mottleL)" opacity="0.6"/>
    <path d="M548 562 C548 530 550 505 572 487 C600 474 630 478 648 485" fill="none" stroke="#b3a35a" stroke-width="10" filter="url(#b3)"/>
    <ellipse cx="588" cy="466" rx="26" ry="5.500" fill="#f1eedb" filter="url(#b3)" transform="rotate(-8 588 466)"/>
    <path d="M523.0 474.7 C524.5 471.2 527.3 463.9 531.0 459.0 C534.7 454.1 539.8 449.1 545.0 445.0 C550.2 440.9 556.7 437.4 562.5 434.5 C568.3 431.6 574.2 429.6 580.0 427.5 C585.8 425.4 592.7 423.5 597.5 422.0 C602.3 420.5 607.4 417.2 609.0 418.7 C610.6 420.2 608.0 426.6 607.0 431.0 C606.0 435.4 606.0 442.2 602.7 445.0 C599.4 447.8 592.3 446.2 587.0 447.6 C581.7 449.1 576.0 451.0 571.0 453.7 C566.0 456.4 561.0 460.2 557.0 464.0 C553.0 467.8 549.9 471.8 546.7 476.5 C543.5 481.2 540.3 486.8 538.0 492.0 C535.7 497.2 534.0 503.9 532.7 508.0 C531.4 512.1 531.1 518.0 530.0 516.7 C528.9 515.4 527.3 506.1 526.0 500.0 C524.7 493.9 522.5 484.2 522.0 480.0 C521.5 475.8 521.5 478.2 523.0 474.7Z" fill="#d3c684" opacity="0.75"/>
    <path d="M525 488 C532 468 546 452 566 442 C580 436 594 432 607 429" fill="none" stroke="#b3a35e" stroke-width="3.500" filter="url(#b2)" opacity="0.8"/>
    <path d="M531.0 520.0 C531.5 518.0 532.6 512.7 534.0 508.0 C535.4 503.3 537.2 497.1 539.5 492.0 C541.8 486.9 544.9 481.9 548.0 477.5 C551.1 473.1 554.0 469.2 558.0 465.5 C562.0 461.8 567.0 458.1 572.0 455.5 C577.0 452.9 583.0 451.0 588.0 449.6 C593.0 448.2 599.7 447.4 602.0 447.0" fill="none" stroke="#8a7a3a" stroke-width="4.500" filter="url(#b2)"/>
    <path d="M536 524 C538 505 548 486 562 473 C574 463 590 456 603 454" fill="none" stroke="#ece6c4" stroke-width="3.500" filter="url(#b2)" opacity="0.85"/>
    <path d="M549 560 C546 540 548 515 556 500" fill="none" stroke="#a8984f" stroke-width="7" filter="url(#b3)" opacity="0.7"/>
    <path d="M524 478 C532 458 560 434 609 419" fill="none" stroke="#e4d999" stroke-width="7" filter="url(#b2)"/>
  </g>
</g>

</svg>
<div id="titlebar">
  <svg width="1198" height="26" viewBox="0 0 1198 26" style="position:absolute;left:0;top:0">
    <path d="M15 6.200 Q19.200 9.500 18.600 12 Q17.600 14.600 16.200 15.200 L15.800 13 L17 10.400 Z" fill="#f6efed"/>
    <path d="M9 6 L14 6 L17.200 10.500 L16.200 12.700 L15.600 13.200 L15.400 19.500 L8 19.500 L10.400 16 L10.200 11 L9 10.500 Z" fill="#353333"/>
    <path d="M1096 12.5h8.500" stroke="#2a1a1c" stroke-width="1" fill="none"/>
    <rect x="1134.5" y="8.500" width="8" height="8" fill="none" stroke="#2a1a1c" stroke-width="1"/>
    <path d="M1173 8.500l8.500 8.500M1181.5 8.500l-8.500 8.500" stroke="#2a1a1c" stroke-width="1.1" fill="none"/>
  </svg>
  <div id="title">Preview</div>
</div>
<div class="lbl" style="left:8px;top:51.2px;">0</div>
<div class="lbl" style="left:590.5px;top:35.2px;">0</div>
<div class="lbl" style="left:1173px;top:51.2px;">100</div>
<div id="track"></div>
<svg width="12" height="18" viewBox="0 0 12 18" style="position:absolute;left:23px;top:49px"><path d="M1 1h9v10.500l-4.500 5.500l-4.500 -5.500z" fill="#0a78d7"/></svg>
</div>
<div style="position:absolute;left:1198px;top:0;width:2px;height:26px;background:#ececec"></div>
<div style="position:absolute;left:1198px;top:71px;width:2px;height:3px;background:#222"></div>
<div style="position:absolute;left:1198px;top:97px;width:2px;height:3px;background:#433"></div>
<div style="position:absolute;left:1198px;top:695px;width:2px;height:4px;background:#2a2424"></div>
</body>
</html>
